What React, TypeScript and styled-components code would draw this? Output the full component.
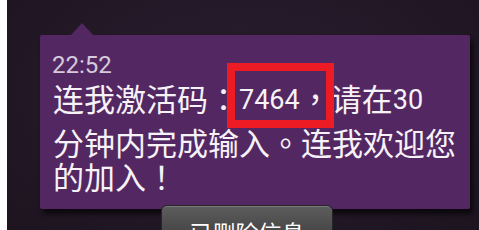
import React from "react";
import styled, { createGlobalStyle } from "styled-components";

const Global = createGlobalStyle`
  html, body { margin: 0; padding: 0; background: #ffffff; }
  #root { width: 479px; height: 230px; overflow: hidden; }
`;

const Screen = styled.div`
  position: relative;
  display: flex;
  flex-direction: column;
  align-items: flex-start;
  margin-left: 7px;
  height: 230px;
  overflow: hidden;
  background: radial-gradient(ellipse at 50% 40%, #2a1d2f 0%, #221826 60%, #1d1420 100%);
  padding: 35px 0 0 33px;
  box-sizing: border-box;
`;

const Card = styled.div`
  position: relative;
  display: flex;
  flex-direction: column;
  width: 430px;
  height: 174px;
  box-sizing: border-box;
  padding: 15px 8px 0 13px;
  background: #532862;
  border-radius: 2px;
  box-shadow: 3px 5px 5px rgba(0, 0, 0, 0.65);

  &::before {
    content: "";
    position: absolute;
    left: 31px;
    top: -12px;
    width: 0;
    height: 0;
    border-left: 11px solid transparent;
    border-right: 11px solid transparent;
    border-bottom: 12px solid #532862;
  }
`;

const Time = styled.div`
  font-family: Roboto, "Noto Sans", sans-serif;
  font-size: 24px;
  line-height: 31px;
  color: #d6cadd;
  margin-left: -1px;
`;

const Line = styled.div<{ $gap?: number }>`
  font-family: "Noto Sans CJK SC", "Noto Sans", sans-serif;
  font-size: 31px;
  line-height: 34px;
  color: #f7f2f8;
  white-space: nowrap;
  margin-bottom: ${(p) => p.$gap ?? 0}px;
`;

const Punct = styled.span`
  font-family: "Noto Sans CJK TC", "Noto Sans CJK SC", sans-serif;
`;

const Num = styled.span`
  font-family: Roboto, "Noto Sans", sans-serif;
  font-size: 27px;
  position: relative;
  top: -2px;
`;

const Highlight = styled.span`
  position: relative;

  &::after {
    content: "";
    position: absolute;
    left: -12px;
    right: -3px;
    top: -12px;
    bottom: -8px;
    border: 8px solid #ed1c24;
    pointer-events: none;
  }
`;

const Toast = styled.div`
  position: absolute;
  left: 154px;
  top: 205px;
  width: 172px;
  height: 44px;
  box-sizing: border-box;
  padding-top: 11px;
  border-radius: 6px 6px 0 0;
  border: 1px solid #262626;
  border-bottom: none;
  background: linear-gradient(#5d5d5d 0%, #4a4a4a 50%, #3d3d3d 100%);
  box-shadow: inset 0 1px 0 rgba(255, 255, 255, 0.18);
  text-align: center;
  font-family: "Noto Sans CJK SC", "Noto Sans", sans-serif;
  font-size: 23px;
  line-height: 30px;
  color: #ffffff;
`;

export default function App() {
  return (
    <>
      <Global />
      <Screen>
        <Card>
          <Time>22:52</Time>
          <Line $gap={6}>
            连我激活码<Punct>：</Punct>
            <Highlight>
              <Num>7464</Num>
              <Punct>，</Punct>
            </Highlight>
            请在<Num>30</Num>
          </Line>
          <Line>
            分钟内完成输入<Punct>。</Punct>连我欢迎您
          </Line>
          <Line>
            的加入<Punct>！</Punct>
          </Line>
        </Card>
        <Toast>已删除信息</Toast>
      </Screen>
    </>
  );
}
